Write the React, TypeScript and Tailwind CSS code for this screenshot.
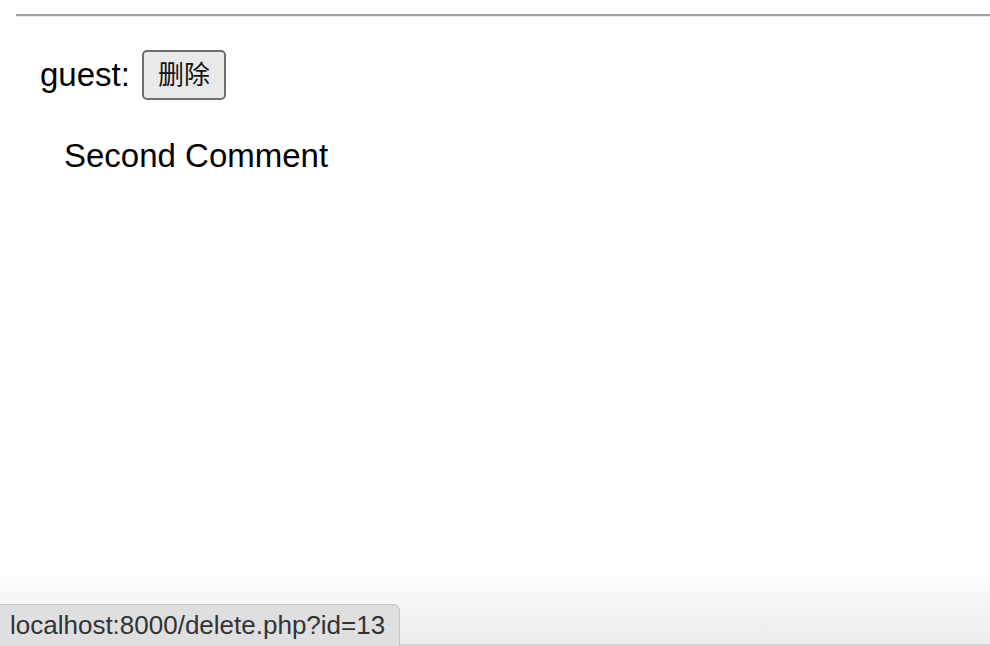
import React from 'react';

const comment = { author: 'guest', body: 'Second Comment', id: 13 };

export default function App() {
  return (
    <div
      className="relative h-[646px] w-[990px] overflow-hidden bg-white text-black"
      style={{ fontFamily: '"Liberation Sans", "Noto Sans CJK SC", Arial, sans-serif' }}
    >
      <div className="pl-4 pt-[14px]">
        <div className="h-[3px] border-t-2 border-[#a2a2a2] bg-[#ececec]" />
      </div>

      <div className="pl-[40px] pt-[33px]">
        <div className="flex h-[50px] items-center text-[33px] leading-[38px]">
          <span>{comment.author}:</span>
          <button className="ml-[12px] h-[50px] w-[84px] rounded-[5px] border-2 border-[#6e6e6e] bg-[#e9e9e9] text-[26px] text-[#111]">
            删除
          </button>
        </div>
        <p className="pl-6 pt-[37px] text-[33px] leading-[38px]">{comment.body}</p>
      </div>

      {/* page bottom shading */}
      <div className="absolute bottom-0 left-0 h-[78px] w-full border-b-2 border-[#d6d6d6] bg-gradient-to-b from-white to-[#ebebeb]" />

      {/* link status bubble */}
      <div className="absolute bottom-0 left-0 flex h-[42px] w-[400px] items-center rounded-tr-[7px] border-t border-r border-[#c4c4c8] bg-[#dfdfe2] pl-[10px] text-[26px] text-[#333]">
        localhost:8000/delete.php?id={comment.id}
      </div>
    </div>
  );
}
